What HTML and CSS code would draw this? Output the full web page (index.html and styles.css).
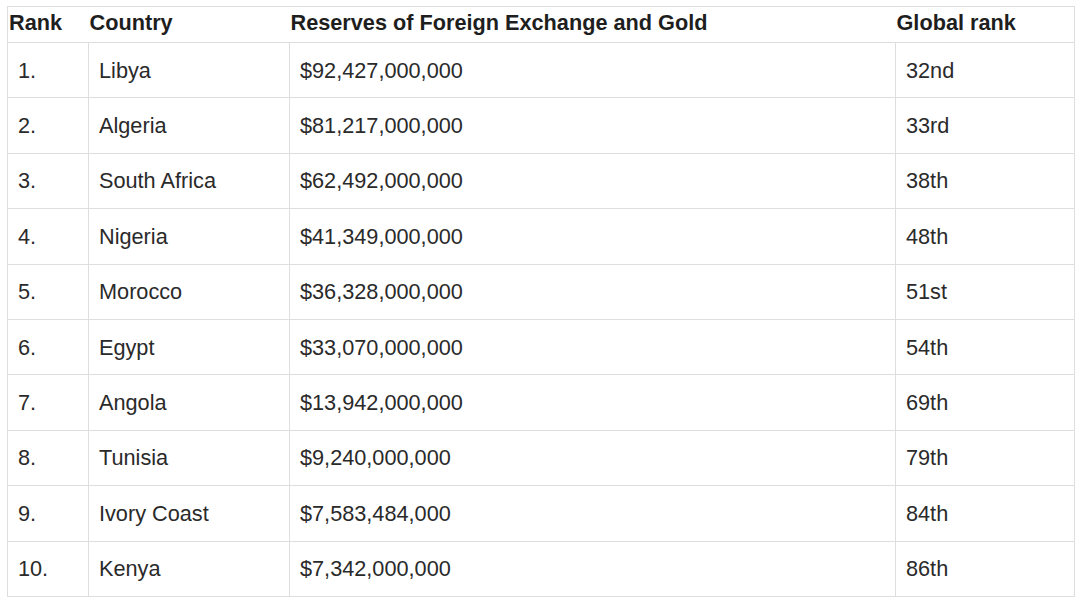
FILE: index.html
```html
<!DOCTYPE html>
<html lang="en">
<head>
<meta charset="utf-8">
<title>Reserves of Foreign Exchange and Gold</title>
<link rel="stylesheet" href="styles.css">
</head>
<body>
<table class="reserves">
  <colgroup>
    <col class="c-rank">
    <col class="c-country">
    <col class="c-reserves">
    <col class="c-global">
  </colgroup>
  <thead>
    <tr>
      <th>Rank</th>
      <th>Country</th>
      <th>Reserves of Foreign Exchange and Gold</th>
      <th>Global rank</th>
    </tr>
  </thead>
  <tbody>
    <tr><td>1.</td><td>Libya</td><td>$92,427,000,000</td><td>32nd</td></tr>
    <tr><td>2.</td><td>Algeria</td><td>$81,217,000,000</td><td>33rd</td></tr>
    <tr><td>3.</td><td>South Africa</td><td>$62,492,000,000</td><td>38th</td></tr>
    <tr><td>4.</td><td>Nigeria</td><td>$41,349,000,000</td><td>48th</td></tr>
    <tr><td>5.</td><td>Morocco</td><td>$36,328,000,000</td><td>51st</td></tr>
    <tr><td>6.</td><td>Egypt</td><td>$33,070,000,000</td><td>54th</td></tr>
    <tr><td>7.</td><td>Angola</td><td>$13,942,000,000</td><td>69th</td></tr>
    <tr><td>8.</td><td>Tunisia</td><td>$9,240,000,000</td><td>79th</td></tr>
    <tr><td>9.</td><td>Ivory Coast</td><td>$7,583,484,000</td><td>84th</td></tr>
    <tr><td>10.</td><td>Kenya</td><td>$7,342,000,000</td><td>86th</td></tr>
  </tbody>
</table>
</body>
</html>
```
FILE: styles.css
```css
html, body {
  margin: 0;
  padding: 0;
  background: #ffffff;
}

body {
  padding: 6px 0 0 7px;
  font-family: "Liberation Sans", Arial, Helvetica, sans-serif;
  font-size: 21.7px;
  color: #2a2a2a;
}

.reserves {
  border-collapse: collapse;
  table-layout: fixed;
  width: 1067px;
  border: 1px solid #dedede;
}

.c-rank { width: 81px; }
.c-country { width: 201px; }
.c-reserves { width: 606px; }
.c-global { width: 179px; }

.reserves th {
  height: 36px;
  box-sizing: border-box;
  padding: 3px 0 0 1px;
  text-align: left;
  vertical-align: top;
  font-weight: bold;
  color: #1e1e1e;
  border-bottom: 1px solid #dedede;
  line-height: normal;
}

.reserves tbody tr {
  height: 55.4px;
}

.reserves td {
  padding: 1px 0 0 10px;
  vertical-align: middle;
  border: 1px solid #dedede;
  line-height: normal;
}
```
